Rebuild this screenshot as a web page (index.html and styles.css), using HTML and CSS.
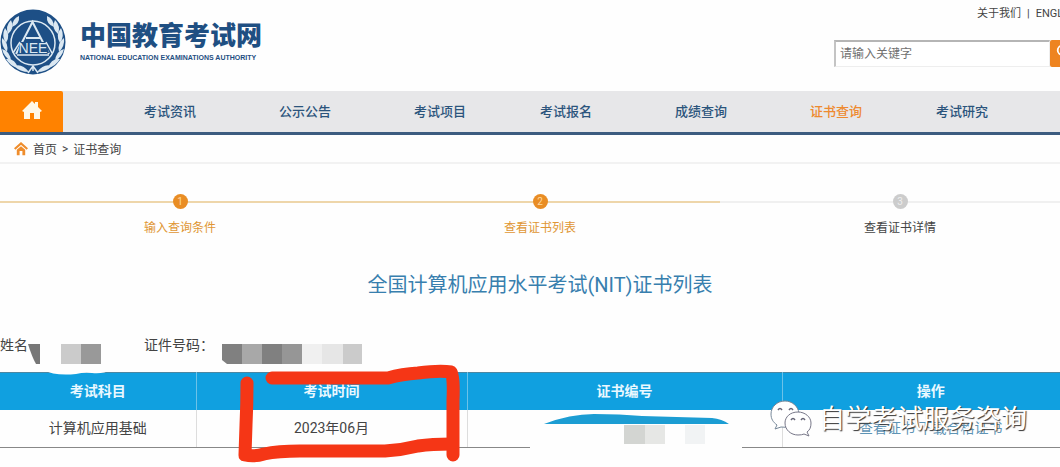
FILE: index.html
```html
<!DOCTYPE html>
<html lang="zh-CN">
  <head>
    <meta charset="UTF-8">
    <title>中国教育考试网 - 证书查询</title>
    <link rel="stylesheet" href="styles.css">
  </head>
  <body>
    <header class="header">
      <a class="logo" href="#">
        <svg class="emblem" viewBox="0 0 66 66" aria-hidden="true">
          <defs>
            <g id="leaves">
              <path d="M29 63Q20 63 14 57Q22 54 29 63Z" />
              <path d="M18 59Q10 57 6 50Q15 49 18 59Z" />
              <path d="M11 52Q4 48 2 40Q10 42 11 52Z" />
              <path d="M7 43Q1 37 2 29Q9 34 7 43Z" />
              <path d="M6 34Q1 27 5 19Q11 26 6 34Z" />
              <path d="M8 25Q5 17 11 11Q15 19 8 25Z" />
              <path d="M12 18Q12 10 19 7Q20 15 12 18Z" />
            </g>
          </defs>
          <circle cx="33" cy="33" r="32.5" fill="#1d4f86" />
          <use href="#leaves" fill="#dbe8f2" />
          <use href="#leaves" fill="#dbe8f2" transform="translate(66 0) scale(-1 1)" />
          <circle cx="33" cy="34" r="22" fill="#1d4f86" stroke="#dbe8f2" stroke-width="1.5" />
          <path d="M16 45L32.500 13L49 45M26 29H40" fill="none" stroke="#dbe8f2" stroke-width="2" />
          <path d="M28 64L33 57L38 64M33 57V62" fill="none" stroke="#dbe8f2" stroke-width="1.500" />
          <path d="M20 33H46L49 44H18Z" fill="#1d4f86" />
          <text class="emblem-text" x="33" y="44" text-anchor="middle">NEE</text>
          <path d="M13 44L20 33M46 33L52 44M17 46H49" fill="none" stroke="#dbe8f2" stroke-width="1.500" />
        </svg>
        <span class="logo-words">
          <span class="logo-title">中国教育考试网</span>
          <span class="logo-sub">NATIONAL EDUCATION EXAMINATIONS AUTHORITY</span>
        </span>
      </a>
      <div class="header-right">
        <div class="top-links">
          <a href="#">关于我们</a><span>|</span><a href="#">ENGLISH</a>
        </div>
        <form class="search">
          <input type="text" placeholder="请输入关键字" aria-label="请输入关键字">
          <button type="button" aria-label="搜索">
            <svg viewBox="0 0 20 20" width="18" height="18" aria-hidden="true">
              <circle cx="8" cy="8" r="5" fill="none" stroke="#fff" stroke-width="2" />
              <path d="M12 12L17 17" stroke="#fff" stroke-width="2" />
            </svg>
          </button>
        </form>
      </div>
    </header>

    <nav class="nav">
      <a class="nav-home" href="#" aria-label="首页">
        <svg viewBox="0 0 20 20" width="20" height="20" aria-hidden="true">
          <path d="M10 1L13 4V2H16V7L20 11L18 12V19H12V13H8V19H2V12L0 11Z" fill="#fff8e8" />
        </svg>
      </a>
      <div class="nav-list">
        <a href="#">考试资讯</a>
        <a href="#">公示公告</a>
        <a href="#">考试项目</a>
        <a href="#">考试报名</a>
        <a href="#">成绩查询</a>
        <a class="active" href="#">证书查询</a>
        <a href="#">考试研究</a>
      </div>
    </nav>

    <div class="crumbs">
      <svg viewBox="0 0 20 20" width="14" height="14" aria-hidden="true">
        <path d="M1 10L10 2L19 10" fill="none" stroke="#ef8d2c" stroke-width="3" />
        <path d="M4 11L10 6L16 11V19H12V13H8V19H4Z" fill="#ef8d2c" />
      </svg>
      <a href="#">首页</a><span>&gt;</span><a href="#">证书查询</a>
    </div>

    <main class="main">
      <ol class="steps">
        <li class="done"><span class="num">1</span>输入查询条件</li>
        <li class="done"><span class="num">2</span>查看证书列表</li>
        <li><span class="num">3</span>查看证书详情</li>
      </ol>

      <h1>全国计算机应用水平考试(NIT)证书列表</h1>

      <section class="result">
        <div class="person">
          <span>姓名</span>
          <span>证件号码：</span>
        </div>
        <table>
          <thead>
            <tr>
              <th class="col-subject">考试科目</th>
              <th class="col-time">考试时间</th>
              <th class="col-number">证书编号</th>
              <th>操作</th>
            </tr>
          </thead>
          <tbody>
            <tr>
              <td>计算机应用基础</td>
              <td>2023年06月</td>
              <td></td>
              <td><a href="#">查看证书</a> <a href="#">下载合格证书</a></td>
            </tr>
          </tbody>
        </table>

        <svg class="marks" viewBox="0 325 1060 142" aria-hidden="true">
          <!-- covered name and id number -->
          <path d="M28 344H40V364H36Q32 357 28 344Z" fill="#777" />
          <path d="M61 344H81V364H61Z" fill="#cbcbcb" />
          <path d="M81 344H101V364H81Z" fill="#999" />
          <path d="M222 344H242V364H227L222 360Z" fill="#808080" />
          <path d="M242 344H262V364H242Z" fill="#a8a8a8" />
          <path d="M262 344H282V364H262Z" fill="#808080" />
          <path d="M282 344H302V364H282Z" fill="#969696" />
          <path d="M302 344H322V364H302Z" fill="#f0f0f0" />
          <path d="M322 344H343V364H322Z" fill="#e6e6e6" />
          <path d="M343 344H362V364H343Z" fill="#cbcbcb" />
          <path d="M44 370H110Q104 374 92 373Q84 372 76 374Q54 376 44 370Z" fill="#fff" />
          <!-- covered certificate number -->
          <path d="M530 424H742V452H530Z" fill="#fefefe" />
          <path d="M544 424Q570 414 594 414Q620 414 642 416Q676 417 712 418Q722 419 729 424Z" fill="#1c9dd3" />
          <path d="M624 425H645V444H624Z" fill="#d3d5d2" />
          <path d="M645 425H665V444H645Z" fill="#e6e7e5" />
          <path d="M685 425H705V444H685Z" fill="#f1f3f4" />
          <!-- red marker -->
          <path d="M247 383Q247 405 246 425L245 455Q254 457 264 454Q278 451 300 451H385Q402 450 418 446Q432 444 451 444" fill="none" stroke="#f53616" stroke-width="13" stroke-linecap="round" stroke-linejoin="round" />
          <path d="M272 378H388Q402 374 418 373Q440 370 451 372Q454 378 453 400V455" fill="none" stroke="#f53616" stroke-width="13" stroke-linecap="round" stroke-linejoin="round" />
        </svg>

        <div class="watermark">
          <svg viewBox="0 0 42 38" width="42" height="38" aria-hidden="true">
            <path d="M15 1C7 1 1 7 1 14C1 19 3 22 7 25L5 29L11 27Q16 28 19 26C28 25 30 19 29 13C28 6 22 1 15 1Z" fill="#fff" stroke="#789" stroke-width="1" />
            <path d="M28 12C20 12 15 17 15 23C15 30 21 35 28 35Q32 35 34 34L39 36L37 32C40 30 41 27 41 23C41 17 35 12 28 12Z" fill="#fff" stroke="#778" stroke-width="1" />
            <path d="M8 10Q10 7 12 10M19 10Q21 7 23 10M21 20Q23 17 25 20M31 20Q33 17 35 20" fill="none" stroke="#667" stroke-width="1.500" />
          </svg>
          <span>自学考试服务咨询</span>
        </div>
      </section>
    </main>
  </body>
</html>
```
FILE: styles.css
```css
* {
  box-sizing: border-box;
}
body {
  margin: 0;
  background-color: #fefefe;
  color: #444;
  font-family: Roboto, "Noto Sans CJK SC", sans-serif;
  font-size: 14px;
  overflow-x: hidden;
}
a {
  color: inherit;
  text-decoration: none;
}
.header {
  display: flex;
  justify-content: space-between;
  height: 91px;
}
.logo {
  display: flex;
  gap: 14px;
  padding-top: 9px;
  color: #1f4f82;
}
.emblem {
  width: 66px;
  height: 66px;
}
.emblem-text {
  font: 14px "Liberation Sans", sans-serif;
  fill: #dbe8f2;
}
.logo-words {
  display: flex;
  flex-direction: column;
  padding-top: 11px;
}
.logo-title {
  font-size: 26px;
  font-weight: 900;
  line-height: 32px;
}
.logo-sub {
  font-family: "Liberation Sans", sans-serif;
  font-size: 7px;
  font-weight: bold;
  line-height: 12px;
}
.header-right {
  width: 226px;
  overflow: hidden;
}
.top-links {
  display: flex;
  gap: 6px;
  padding: 6px 0 0 143px;
  font-size: 11px;
  line-height: 16px;
  white-space: nowrap;
}
.search {
  display: flex;
  width: 260px;
  height: 27px;
  margin-top: 18px;
}
.search input {
  width: 216px;
  padding: 0 4px;
  border: 1px solid #eee;
  border-top: 2px solid #b5b5b5;
  border-left: 2px solid #c4c4c4;
  background-color: #fff;
  font: inherit;
  font-size: 12px;
}
.search input::placeholder {
  color: #707070;
}
.search button {
  flex: 1;
  padding: 0 5px;
  border: 0;
  border-radius: 2px;
  background-color: #ee8420;
  text-align: left;
}
.nav {
  display: flex;
  height: 44px;
  border-bottom: 3px solid #3c5c80;
  background-color: #e7e7e9;
}
.nav-home {
  display: flex;
  align-items: center;
  justify-content: center;
  width: 63px;
  padding-bottom: 4px;
  border-radius: 0 2px 0 0;
  background-color: #ff8200;
}
.nav-list {
  flex: 1;
  display: grid;
  grid-template-columns: 7fr 8fr 7fr 7fr 8fr 7fr 7fr;
  padding: 0 35px 0 44px;
  color: #2b547c;
  font-size: 13px;
  font-weight: 500;
  line-height: 42px;
  text-align: center;
}
.nav-list .active {
  color: #ee8a30;
}
.crumbs {
  display: flex;
  align-items: center;
  gap: 5px;
  height: 29px;
  padding-left: 14px;
  border-bottom: 2px solid #f2f2f2;
  font-size: 12px;
}
/* content is a little wider than the window and runs off the right side */
.main {
  width: calc(100% + 20px);
}
.steps {
  display: grid;
  grid-template-columns: repeat(3, 1fr);
  margin: 0;
  padding: 30px 0 0;
  list-style: none;
  font-size: 12px;
  line-height: 18px;
  text-align: center;
}
.steps li {
  background: linear-gradient(#f0f0f0, #f0f0f0) 0 7px / 100% 2px no-repeat;
}
.steps .done {
  background-image: linear-gradient(#eed6aa, #eed6aa);
  color: #e09634;
}
.num {
  display: block;
  width: 15px;
  height: 15px;
  margin: 0 auto 10px;
  border-radius: 50%;
  background-color: #ccc;
  color: #eee;
  font-size: 10px;
  line-height: 15px;
}
.done .num {
  background-color: #e98d24;
  color: #ffd9a0;
}
h1 {
  margin: 32px 0 0;
  color: #387fae;
  font-size: 20px;
  font-weight: 400;
  line-height: 32px;
  text-align: center;
}
.result {
  position: relative;
  height: 142px;
  margin-top: 24px;
}
.person {
  display: flex;
  gap: 116px;
  height: 47px;
  line-height: 40px;
}
table {
  width: 100%;
  border-collapse: collapse;
  table-layout: fixed;
  text-align: center;
}
th,
td {
  height: 38px;
  padding: 0;
  border-right: 1px solid #ddd;
  line-height: 20px;
}
th {
  height: 37px;
  border-top: 1px solid #4c87a2;
  border-right-color: #6cc2e8;
  background-color: #10a0e0;
  color: #eaf8ff;
  font-weight: 700;
}
td {
  border-bottom: 1px solid #888;
}
td a {
  color: #5e94b5;
}
.col-subject {
  width: 196px;
}
.col-time {
  width: 271px;
}
.col-number {
  width: 315px;
}
.marks {
  position: absolute;
  top: 0;
  left: 0;
  width: 1060px;
  height: 142px;
}
.watermark {
  position: absolute;
  top: 75px;
  left: 770px;
  display: flex;
  align-items: center;
  gap: 7px;
  color: #fff;
  font-size: 26px;
  line-height: 38px;
  white-space: nowrap;
  text-shadow: 1px 1px 1px #333;
}
```
